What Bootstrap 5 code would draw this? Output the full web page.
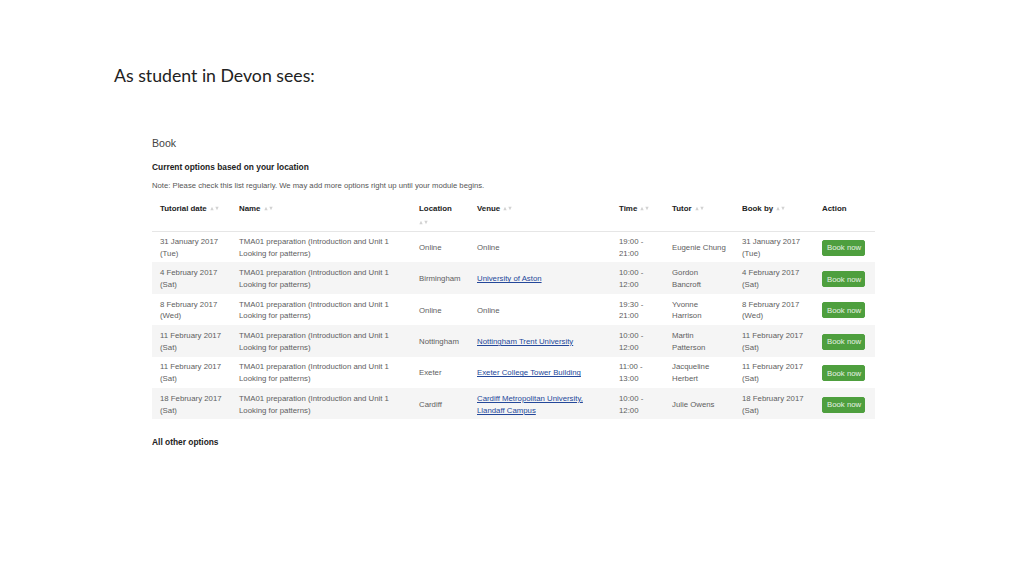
<!DOCTYPE html>
<html lang="en">
<head>
<meta charset="utf-8">
<title>Book</title>
<link href="https://cdn.jsdelivr.net/npm/bootstrap@5.3.0/dist/css/bootstrap.min.css" rel="stylesheet">
<style>
html,body{height:100%;background:#fff}
body{width:1024px;height:576px;overflow:hidden;font-family:"Liberation Sans",Arial,sans-serif;color:#444}
.slide-title{font-family:Lato,"Liberation Sans",sans-serif;font-size:17.7px;line-height:22px;color:#222;margin:0;padding:65px 0 0 114px}
.sheet{width:723px;margin:49px 0 0 152px}
.page-h{font-size:10.6px;line-height:14px;font-weight:400;color:#444;margin:0 0 11px}
.sub-h{font-size:8.4px;line-height:12px;font-weight:700;color:#222;margin:0 0 7px}
.note{font-size:7.7px;line-height:12px;color:#555;margin:0 0 6px}
.tut-table{table-layout:fixed;width:723px;margin:0 0 17px;font-size:7.8px;line-height:11.8px;--bs-table-color:#555}
.tut-table>thead>tr>th{padding:4px 8px 0;height:33px;vertical-align:top;color:#222;font-size:7.9px;line-height:14px;border-bottom:1px solid #e6e6e6}
.tut-table>tbody>tr>td{padding:4px 8px 2px;height:31.4px;vertical-align:middle;border-bottom:0;color:#606060}
.tut-table>tbody>tr:nth-child(even)>td{background-color:#f5f5f5}
.tut-table>tbody>tr>td a.venue{color:#24489a}
.sort{display:inline-block;width:9px;height:5px;vertical-align:0;margin-left:1px}
.tut-table>tbody>tr>td a.book-btn{--bs-btn-padding-x:4px;--bs-btn-padding-y:1.5px;--bs-btn-font-size:7.8px;--bs-btn-bg:#4e9f3e;--bs-btn-border-color:#4e9f3e;--bs-btn-hover-bg:#4e9f3e;--bs-btn-hover-border-color:#4e9f3e;--bs-btn-border-radius:2px;--bs-btn-line-height:11px;--bs-btn-color:#e6f2e3;--bs-btn-hover-color:#e6f2e3;width:43px;white-space:nowrap;color:#e6f2e3}
.sub-other{margin:0}
</style>
</head>
<body>
<h1 class="slide-title fw-normal">As student in Devon sees:</h1>
<main class="sheet">
<h2 class="page-h">Book</h2>
<h3 class="sub-h">Current options based on your location</h3>
<p class="note">Note: Please check this list regularly. We may add more options right up until your module begins.</p>
<table class="table tut-table">
<colgroup><col style="width:79px"><col style="width:180px"><col style="width:58px"><col style="width:142px"><col style="width:53px"><col style="width:70px"><col style="width:80px"><col style="width:61px"></colgroup>
<thead><tr>
<th>Tutorial date <svg class="sort" viewBox="0 0 10 6"><path d="M0 5 2 1 4 5zM6 1h4L8 5z" fill="#d2d2d2"/></svg></th>
<th>Name <svg class="sort" viewBox="0 0 10 6"><path d="M0 5 2 1 4 5zM6 1h4L8 5z" fill="#d2d2d2"/></svg></th>
<th>Location<br><svg class="sort ms-0" viewBox="0 0 10 6"><path d="M0 5 2 1 4 5zM6 1h4L8 5z" fill="#d2d2d2"/></svg></th>
<th>Venue <svg class="sort" viewBox="0 0 10 6"><path d="M0 5 2 1 4 5zM6 1h4L8 5z" fill="#d2d2d2"/></svg></th>
<th>Time <svg class="sort" viewBox="0 0 10 6"><path d="M0 5 2 1 4 5zM6 1h4L8 5z" fill="#d2d2d2"/></svg></th>
<th>Tutor <svg class="sort" viewBox="0 0 10 6"><path d="M0 5 2 1 4 5zM6 1h4L8 5z" fill="#d2d2d2"/></svg></th>
<th>Book by <svg class="sort" viewBox="0 0 10 6"><path d="M0 5 2 1 4 5zM6 1h4L8 5z" fill="#d2d2d2"/></svg></th>
<th>Action</th>
</tr></thead>
<tbody>
<tr><td>31 January 2017 (Tue)</td><td>TMA01 preparation (Introduction and Unit 1 Looking for patterns)</td><td>Online</td><td>Online</td><td>19:00 - 21:00</td><td>Eugenie Chung</td><td>31 January 2017 (Tue)</td><td><a class="btn book-btn" href="#">Book now</a></td></tr>
<tr><td>4 February 2017 (Sat)</td><td>TMA01 preparation (Introduction and Unit 1 Looking for patterns)</td><td>Birmingham</td><td><a class="venue" href="#">University of Aston</a></td><td>10:00 - 12:00</td><td>Gordon Bancroft</td><td>4 February 2017 (Sat)</td><td><a class="btn book-btn" href="#">Book now</a></td></tr>
<tr><td>8 February 2017 (Wed)</td><td>TMA01 preparation (Introduction and Unit 1 Looking for patterns)</td><td>Online</td><td>Online</td><td>19:30 - 21:00</td><td>Yvonne Harrison</td><td>8 February 2017 (Wed)</td><td><a class="btn book-btn" href="#">Book now</a></td></tr>
<tr><td>11 February 2017 (Sat)</td><td>TMA01 preparation (Introduction and Unit 1 Looking for patterns)</td><td>Nottingham</td><td><a class="venue" href="#">Nottingham Trent University</a></td><td>10:00 - 12:00</td><td>Martin Patterson</td><td>11 February 2017 (Sat)</td><td><a class="btn book-btn" href="#">Book now</a></td></tr>
<tr><td>11 February 2017 (Sat)</td><td>TMA01 preparation (Introduction and Unit 1 Looking for patterns)</td><td>Exeter</td><td><a class="venue" href="#">Exeter College Tower Building</a></td><td>11:00 - 13:00</td><td>Jacqueline Herbert</td><td>11 February 2017 (Sat)</td><td><a class="btn book-btn" href="#">Book now</a></td></tr>
<tr><td>18 February 2017 (Sat)</td><td>TMA01 preparation (Introduction and Unit 1 Looking for patterns)</td><td>Cardiff</td><td><a class="venue" href="#">Cardiff Metropolitan University, Llandaff Campus</a></td><td>10:00 - 12:00</td><td>Julie Owens</td><td>18 February 2017 (Sat)</td><td><a class="btn book-btn" href="#">Book now</a></td></tr>
</tbody>
</table>
<h3 class="sub-h sub-other">All other options</h3>
</main>
<script src="https://cdn.jsdelivr.net/npm/bootstrap@5.3.0/dist/js/bootstrap.bundle.min.js"></script>
</body>
</html>
